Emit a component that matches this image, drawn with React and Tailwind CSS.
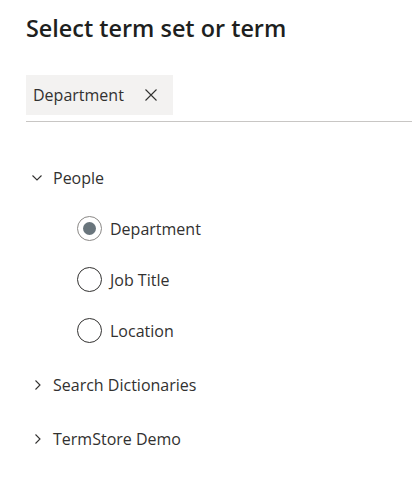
import { useState } from "react";

const font = { fontFamily: '"Open Sans", "Noto Sans", sans-serif' };

function ChevronDown() {
  return (
    <svg width="12" height="8" viewBox="0 0 12 8" className="shrink-0">
      <path d="M1.5 1.5 L6 6 L10.5 1.5" fill="none" stroke="#323130" strokeWidth="1.1" />
    </svg>
  );
}

function ChevronRight() {
  return (
    <svg width="8" height="12" viewBox="0 0 8 12" className="shrink-0">
      <path d="M1.5 1.5 L6 6 L1.5 10.5" fill="none" stroke="#323130" strokeWidth="1.1" />
    </svg>
  );
}

function Radio({ label, checked, onClick }) {
  return (
    <div className="flex items-center h-[51px] pl-[51px] cursor-pointer" onClick={onClick}>
      {checked ? (
        <span className="w-[25px] h-[25px] rounded-full border border-[#8a8886] flex items-center justify-center">
          <span className="w-[13px] h-[13px] rounded-full bg-[#69757c]" />
        </span>
      ) : (
        <span className="w-[25px] h-[25px] rounded-full border-[1.5px] border-[#323130]" />
      )}
      <span className="ml-[8px] text-[16px] text-[#323130]">{label}</span>
    </div>
  );
}

export default function App() {
  const [selected, setSelected] = useState("Department");

  return (
    <div className="bg-white w-[412px] h-[497px] pl-[26px] pt-[12px]" style={font}>
      <h1 className="h-[32px] leading-[32px] text-[23.4px] font-semibold text-[#201f1e]">
        Select term set or term
      </h1>

      {/* Selected term chip */}
      <div className="mt-[31px] inline-flex items-center h-[40px] bg-[#f3f2f1] pl-[7px] pr-[16px]">
        <span className="text-[16px] text-[#323130]">{selected}</span>
        <svg width="12" height="12" viewBox="0 0 12 12" className="ml-[21px]">
          <path d="M0.5 0.5 L11.5 11.5 M11.5 0.5 L0.5 11.5" stroke="#323130" strokeWidth="1.1" />
        </svg>
      </div>
      <div className="mt-[6px] h-px bg-[#c8c6c4]" />

      {/* Tree */}
      <div className="mt-[31px]">
        <div className="flex items-center h-[50px]">
          <span className="w-[27px] pl-[5px] flex items-center">
            <ChevronDown />
          </span>
          <span className="text-[16px] text-[#323130]">People</span>
        </div>
        {["Department", "Job Title", "Location"].map((t) => (
          <Radio key={t} label={t} checked={selected === t} onClick={() => setSelected(t)} />
        ))}
        <div className="flex items-center h-[58px]">
          <span className="w-[27px] pl-[8px] flex items-center">
            <ChevronRight />
          </span>
          <span className="text-[16px] text-[#323130]">Search Dictionaries</span>
        </div>
        <div className="flex items-center h-[50px]">
          <span className="w-[27px] pl-[8px] flex items-center">
            <ChevronRight />
          </span>
          <span className="text-[16px] text-[#323130]">TermStore Demo</span>
        </div>
      </div>
    </div>
  );
}
